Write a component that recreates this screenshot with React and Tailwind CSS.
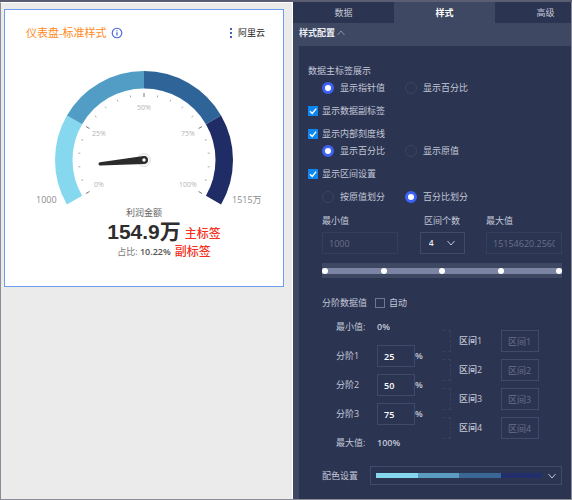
import { useState } from 'react'

const COLORS = ['#85d8ee', '#519dc6', '#2f6499', '#1f2c66']

const CX = 120
const CY = 94

// angle in degrees, 0 is straight up, clockwise
function point(angle, r) {
  const rad = (angle * Math.PI) / 180
  return [CX + r * Math.sin(rad), CY - r * Math.cos(rad)]
}

function segment(from, to, outer, inner) {
  const a = point(from, outer)
  const b = point(to, outer)
  const c = point(to, inner)
  const d = point(from, inner)
  return `M${a} A${outer} ${outer} 0 0 1 ${b} L${c} A${inner} ${inner} 0 0 0 ${d} Z`
}

const TICKS = Array.from({ length: 21 }, (_, i) => ({ angle: -120 + i * 12, major: i % 5 === 0 }))

const SCALE = [
  { x: 75, y: 121, text: '0%' },
  { x: 75, y: 70, text: '25%' },
  { x: 120, y: 44, text: '50%' },
  { x: 164, y: 70, text: '75%' },
  { x: 164, y: 121, text: '100%' },
]

function Gauge() {
  return (
    <svg viewBox="0 0 240 140" className="mx-auto block w-full max-w-[240px]" role="img" aria-label="利润金额">
      {COLORS.map((color, i) => (
        <path key={color} d={segment(-120 + i * 60, -60 + i * 60, 89, 71.5)} fill={color} />
      ))}
      {TICKS.map(({ angle, major }) => {
        const [x1, y1] = point(angle, major ? 67 : 66)
        const [x2, y2] = point(angle, major ? 63 : 64)
        return <line key={angle} x1={x1} y1={y1} x2={x2} y2={y2} stroke={major ? '#777' : '#aaa'} strokeWidth="1" />
      })}
      {SCALE.map(s => (
        <text key={s.text} x={s.x} y={s.y} textAnchor="middle" className="fill-[#b4b4b4] text-[7px]">{s.text}</text>
      ))}
      <circle cx={CX} cy={CY} r="6.5" fill="#f4f4f4" stroke="#e2e2e2" strokeWidth="1" />
      <path d="M119.6 90 L76 96.2 A1.6 1.6 0 0 0 76.2 99.4 L120.4 98 A4 4 0 0 0 119.6 90 Z" fill="#2b2b2b" />
      <circle cx={CX} cy={CY} r="1.7" fill="#fff" />
      <text x="12" y="137" className="fill-[#8c8c8c] text-[9px]">1000</text>
      <text x="208" y="137" className="fill-[#8c8c8c] text-[9px]">1515万</text>
    </svg>
  )
}

function ChartCard() {
  return (
    <section className="border border-[#709df0] bg-white pt-3.5 pb-[27px]">
      <header className="flex h-[18px] items-center pr-[18px] pl-[21px]">
        <h1 className="text-[11px] text-[#ff8a1c]">仪表盘-标准样式</h1>
        <svg viewBox="0 0 12 12" className="ml-1 size-3" fill="none" stroke="#3f62d8">
          <circle cx="6" cy="6" r="4.8" strokeWidth="1.1" />
          <path d="M6 5.2V8.6M6 3.2V4.3" strokeWidth="1.2" />
        </svg>
        <svg viewBox="0 0 2 10" className="mr-1.5 ml-auto h-2.5 w-0.5" fill="#3f62b8">
          <rect width="2" height="2" />
          <rect y="4" width="2" height="2" />
          <rect y="8" width="2" height="2" />
        </svg>
        <a href="#aliyun" className="text-[9px] text-[#222]">阿里云</a>
      </header>
      <div className="mt-6">
        <Gauge />
      </div>
      <div className="flex flex-col items-center">
        <p className="text-[9px] leading-[13px] text-[#666]">利润金额</p>
        <p className="relative font-[Liberation_Sans,Noto_Sans_CJK_SC,sans-serif] text-[21px] leading-[26px] font-bold whitespace-nowrap text-[#2e2e2e]">
          154.9万
          <span className="absolute top-0.5 left-full ml-1 text-[12px] leading-[26px] font-medium text-[#f5301c]">主标签</span>
        </p>
        <p className="relative text-[9px] leading-[14px] whitespace-nowrap text-[#777]">
          占比: <span className="font-semibold text-[#555]">10.22%</span>
          <span className="absolute top-0 left-full ml-1 text-[12px] leading-[14px] font-medium text-[#f5301c]">副标签</span>
        </p>
      </div>
    </section>
  )
}

function Chevron({ up, className }) {
  return (
    <svg viewBox="0 0 8 6" className={className} fill="none" stroke="currentColor" strokeWidth="1">
      <path d={up ? 'M0.5 5L4 1L7.5 5' : 'M0.5 1L4 5L7.5 1'} />
    </svg>
  )
}

function Check({ label, defaultChecked }) {
  return (
    <label className="flex h-[17px] items-center">
      <span className="relative size-2.5">
        <input
          type="checkbox"
          defaultChecked={defaultChecked}
          className="peer block size-2.5 appearance-none border border-[#6f7793] checked:border-[#0d86f2] checked:bg-[#0d86f2]"
        />
        <svg viewBox="0 0 10 10" className="pointer-events-none absolute inset-0 hidden size-2.5 peer-checked:block" fill="none" stroke="#fff" strokeWidth="1.4">
          <path d="M2 5.2L4.2 7.4L8.2 2.6" />
        </svg>
      </span>
      <span className="ml-1">{label}</span>
    </label>
  )
}

function RadioRow({ name, options, selected }) {
  return (
    <div className="grid h-[17px] grid-cols-[83px_1fr] items-center pl-3.5">
      {options.map(o => (
        <label key={o} className="flex items-center gap-1.5">
          <input
            type="radio"
            name={name}
            defaultChecked={o === selected}
            className="size-3 appearance-none rounded-full border border-[#3b4462] checked:border-[3px] checked:border-[#3d62f5] checked:bg-white"
          />
          {o}
        </label>
      ))}
    </div>
  )
}

const FIELD = 'h-[22px] border bg-transparent outline-none'

function RangeFields() {
  return (
    <div className="flex justify-between">
      <div className="flex w-[76px] flex-col gap-[3px]">
        <label htmlFor="min" className="h-[17px] leading-[17px]">最小值</label>
        <input id="min" disabled defaultValue="1000" className={`${FIELD} border-[#353e5b] px-1.5 text-[#69718b]`} />
      </div>
      <div className="flex w-[45px] flex-col gap-[3px]">
        <label htmlFor="count" className="h-[17px] text-center leading-[17px]">区间个数</label>
        <div className="relative">
          <select id="count" defaultValue="4" className={`${FIELD} w-full appearance-none border-[#414a69] px-2 font-semibold text-[#e4e7f0]`}>
            <option>2</option>
            <option>3</option>
            <option>4</option>
            <option>5</option>
          </select>
          <Chevron className="pointer-events-none absolute top-2 right-2.5 h-1.5 w-2" />
        </div>
      </div>
      <div className="flex w-[76px] flex-col gap-[3px]">
        <label htmlFor="max" className="h-[17px] leading-[17px]">最大值</label>
        <input id="max" disabled defaultValue="15154620.256000" className={`${FIELD} border-[#353e5b] px-1.5 text-[#69718b]`} />
      </div>
    </div>
  )
}

function StepSlider() {
  return (
    <div className="relative mt-[9px] flex h-[15px] items-center bg-[#3f4862]">
      <div className="h-1.5 w-full bg-[#7b84a3]" />
      {[0, 25, 50, 75, 100].map(v => (
        <input
          key={v}
          type="range"
          aria-label={`${v}%`}
          defaultValue={v}
          className="pointer-events-none absolute inset-0 m-0 w-full appearance-none bg-transparent [&::-webkit-slider-thumb]:pointer-events-auto [&::-webkit-slider-thumb]:size-1.5 [&::-webkit-slider-thumb]:appearance-none [&::-webkit-slider-thumb]:rounded-full [&::-webkit-slider-thumb]:bg-white"
        />
      ))}
    </div>
  )
}

function Steps() {
  return (
    <div className="mt-[5px] flex pl-3.5">
      <div className="flex w-[107px] flex-col gap-[7px]">
        <div className="flex h-[22px] items-center">
          <span className="w-[41px]">最小值:</span>
          <span className="font-semibold">0%</span>
        </div>
        {[25, 50, 75].map((v, i) => (
          <div key={v} className="flex h-[22px] items-center">
            <label htmlFor={`step${i}`} className="w-[41px]">分阶{i + 1}</label>
            <input id={`step${i}`} defaultValue={v} className={`${FIELD} w-[38px] border-[#414a69] px-1.5 font-semibold text-white`} />
            <span className="font-semibold">%</span>
          </div>
        ))}
        <div className="flex h-[22px] items-center">
          <span className="w-[41px]">最大值:</span>
          <span className="font-semibold">100%</span>
        </div>
      </div>
      <div className="flex flex-col gap-[7px] pt-3.5">
        {[1, 2, 3, 4].map(n => (
          <div key={n} className="flex h-[22px] items-center">
            <span className="h-full w-2 border border-l-0 border-dashed border-[#38415e]" />
            <label htmlFor={`range${n}`} className="ml-2 w-[42px] font-medium">区间{n}</label>
            <input id={`range${n}`} placeholder={`区间${n}`} className={`${FIELD} w-[38px] border-[#414a69] px-1.5 placeholder:text-[#69718b]`} />
          </div>
        ))}
      </div>
    </div>
  )
}

function Palette() {
  return (
    <div className="mt-3 flex items-center">
      <span id="palette" className="w-12">配色设置</span>
      <button type="button" aria-labelledby="palette" aria-haspopup="listbox" className="flex h-[19px] flex-1 items-center border border-[#414a69] px-[5px]">
        <span className="flex h-[5px] flex-1">
          {['#85d8ee', '#5a9dc0', '#3b6796', '#232f6c'].map(c => (
            <span key={c} className="flex-1" style={{ backgroundColor: c }} />
          ))}
        </span>
        <Chevron className="ml-1.5 h-1.5 w-2" />
      </button>
    </div>
  )
}

const TABS = ['数据', '样式', '高级']

function StylePanel() {
  const [tab, setTab] = useState('样式')
  const [open, setOpen] = useState(true)
  return (
    <aside className="flex w-[279px] shrink-0 flex-col overflow-hidden border-r border-[#8a8d98] bg-[#3f4862] text-[9px] text-[#c3c8d8]">
      <nav className="flex h-[21px]">
        {TABS.map(t => (
          <button
            key={t}
            type="button"
            onClick={() => setTab(t)}
            className={`w-[101px] shrink-0 ${t === tab ? 'bg-[#3f4862] font-bold text-white' : 'bg-[#2b3450]'}`}
          >
            {t}
          </button>
        ))}
      </nav>
      <button type="button" onClick={() => setOpen(!open)} className="flex h-[23px] items-center pb-1 pl-1.5 font-bold text-[#eceef5]">
        样式配置
        <Chevron up={open} className="ml-0.5 h-1.5 w-2 text-[#8a91a8]" />
      </button>
      {open && (
        <div className="ml-1.5 flex-1 bg-[#2b3450] pt-4 pr-[9px] pl-[9px]">
          <div className="flex flex-col gap-1.5">
            <div>
              <p className="h-[17px] leading-[17px]">数据主标签展示</p>
              <RadioRow name="main" options={['显示指针值', '显示百分比']} selected="显示指针值" />
            </div>
            <Check label="显示数据副标签" defaultChecked />
            <div>
              <Check label="显示内部刻度线" defaultChecked />
              <RadioRow name="scale" options={['显示百分比', '显示原值']} selected="显示百分比" />
            </div>
            <Check label="显示区间设置" defaultChecked />
            <RadioRow name="split" options={['按原值划分', '百分比划分']} selected="百分比划分" />
          </div>
          <div className="mt-[7px] pl-3.5">
            <RangeFields />
            <StepSlider />
            <div className="mt-4 flex items-center gap-2">
              <span>分阶数据值</span>
              <Check label="自动" />
            </div>
            <Steps />
            <Palette />
          </div>
        </div>
      )}
    </aside>
  )
}

export default function App() {
  return (
    <div className="flex min-h-screen flex-col border-b border-[#8a8d98] bg-[#ebebeb] font-[Open_Sans,Noto_Sans_CJK_SC,sans-serif]">
      <div className="h-0.5 bg-[#5b5e72]" />
      <div className="flex flex-1">
        <main className="min-w-0 flex-1 border-t border-r border-l border-t-white border-r-white border-l-[#8a8d98] pt-1.5 pr-2 pl-[3px]">
          <ChartCard />
        </main>
        <StylePanel />
      </div>
    </div>
  )
}
